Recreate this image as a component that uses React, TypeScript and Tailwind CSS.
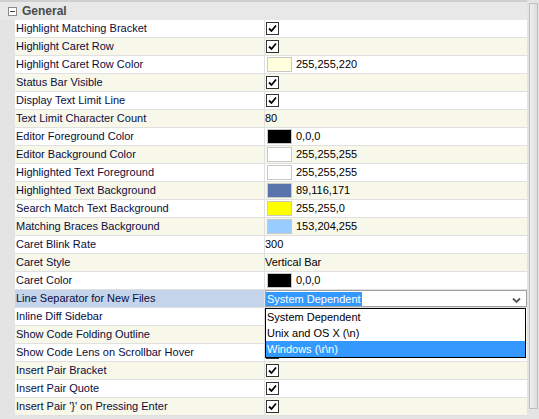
import React from 'react';

type Row =
  | { label: string; kind: 'check' }
  | { label: string; kind: 'color'; swatch: string; value: string }
  | { label: string; kind: 'text'; value: string }
  | { label: string; kind: 'combo'; value: string };

const rows: Row[] = [
  { label: 'Highlight Matching Bracket', kind: 'check' },
  { label: 'Highlight Caret Row', kind: 'check' },
  { label: 'Highlight Caret Row Color', kind: 'color', swatch: '#ffffdc', value: '255,255,220' },
  { label: 'Status Bar Visible', kind: 'check' },
  { label: 'Display Text Limit Line', kind: 'check' },
  { label: 'Text Limit Character Count', kind: 'text', value: '80' },
  { label: 'Editor Foreground Color', kind: 'color', swatch: '#000000', value: '0,0,0' },
  { label: 'Editor Background Color', kind: 'color', swatch: '#ffffff', value: '255,255,255' },
  { label: 'Highlighted Text Foreground', kind: 'color', swatch: '#ffffff', value: '255,255,255' },
  { label: 'Highlighted Text Background', kind: 'color', swatch: '#5974ab', value: '89,116,171' },
  { label: 'Search Match Text Background', kind: 'color', swatch: '#ffff00', value: '255,255,0' },
  { label: 'Matching Braces Background', kind: 'color', swatch: '#99ccff', value: '153,204,255' },
  { label: 'Caret Blink Rate', kind: 'text', value: '300' },
  { label: 'Caret Style', kind: 'text', value: 'Vertical Bar' },
  { label: 'Caret Color', kind: 'color', swatch: '#000000', value: '0,0,0' },
  { label: 'Line Separator for New Files', kind: 'combo', value: 'System Dependent' },
  { label: 'Inline Diff Sidebar', kind: 'check' },
  { label: 'Show Code Folding Outline', kind: 'check' },
  { label: 'Show Code Lens on Scrollbar Hover', kind: 'check' },
  { label: 'Insert Pair Bracket', kind: 'check' },
  { label: 'Insert Pair Quote', kind: 'check' },
  { label: "Insert Pair '}' on Pressing Enter", kind: 'check' },
];

const options = ['System Dependent', 'Unix and OS X (\\n)', 'Windows (\\r\\n)'];

function CheckBox() {
  return (
    <div className="ml-px w-[13px] h-[13px] border border-[#333] bg-white flex items-center justify-center">
      <svg width="9" height="9" viewBox="0 0 9 9">
        <path d="M1 4.5 L3.5 7 L8 1.5" fill="none" stroke="#000" strokeWidth="1.8" />
      </svg>
    </div>
  );
}

function Value({ row }: { row: Row }) {
  if (row.kind === 'check') return <CheckBox />;
  if (row.kind === 'text') return <span>{row.value}</span>;
  if (row.kind === 'color')
    return (
      <div className="flex items-center">
        <div
          className="ml-[2px] w-[25px] h-[15px] border border-[#c8c8c8]"
          style={{ backgroundColor: row.swatch }}
        />
        <span className="ml-[4px]">{row.value}</span>
      </div>
    );
  return (
    <div className="relative w-full h-full">
      <div className="h-[17px] border border-[#a0a0a0] bg-white flex items-center justify-between">
        <span className="bg-[#3399ff] text-white px-px leading-[14px]">{row.value}</span>
        <svg width="9" height="7" viewBox="0 0 9 7" className="mr-[5px] mt-[3px]">
          <path d="M1 1.5 L4.5 5 L8 1.5" fill="none" stroke="#555" strokeWidth="1.8" />
        </svg>
      </div>
      <div className="absolute left-0 right-[1px] top-[18px] z-10 border border-black bg-white">
        {options.map((o, i) => (
          <div
            key={o}
            className={
              'h-[16px] leading-[16px] px-px ' +
              (i === 2 ? 'bg-[#3399ff] text-white' : 'text-black')
            }
          >
            {o}
          </div>
        ))}
      </div>
    </div>
  );
}

export default function App() {
  return (
    <div
      className="w-[539px] h-[419px] flex bg-[#e4e4e4] overflow-hidden text-[11px] text-black"
      style={{ fontFamily: '"Liberation Sans", Arial, sans-serif' }}
    >
      <div className="w-[527px] flex flex-col">
        <div className="h-[2px] bg-[#cfcfcf]" />
        <div className="h-[18px] flex items-center bg-[#e8e8e8]">
          <div className="ml-[8px] w-[9px] h-[9px] border border-[#8a8a8a] bg-white flex items-center justify-center">
            <div className="w-[5px] h-px bg-[#444]" />
          </div>
          <span className="ml-[5px] font-bold text-[12px] text-[#4a4a4a]">General</span>
        </div>
        {rows.map((row, i) => {
          const bg = i % 2 === 0 ? 'bg-white' : 'bg-[#f7f7ea]';
          const selected = row.kind === 'combo';
          return (
            <div key={row.label} className="h-[18px] flex">
              <div className="w-[15px] bg-[#e4e4e4]" />
              <div
                className={
                  'w-[250px] border-b border-r border-[#e0e0e0] flex items-center pl-px text-[#0c0c3c] ' +
                  (selected ? 'bg-[#c4d4ea]' : bg)
                }
              >
                {row.label}
              </div>
              <div
                className={
                  'flex-1 border-b border-[#e0e0e0] flex items-center ' + (selected ? 'bg-white' : bg)
                }
              >
                <Value row={row} />
              </div>
            </div>
          );
        })}
      </div>
      <div className="flex-1 flex flex-col pt-[3px] pl-[2px] pb-[10px] bg-[#e4e4e4]">
        <div className="flex-1 w-[9px] border border-[#bdbdbd] bg-gradient-to-r from-[#f0f0f0] to-[#dcdcdc]" />
      </div>
    </div>
  );
}
